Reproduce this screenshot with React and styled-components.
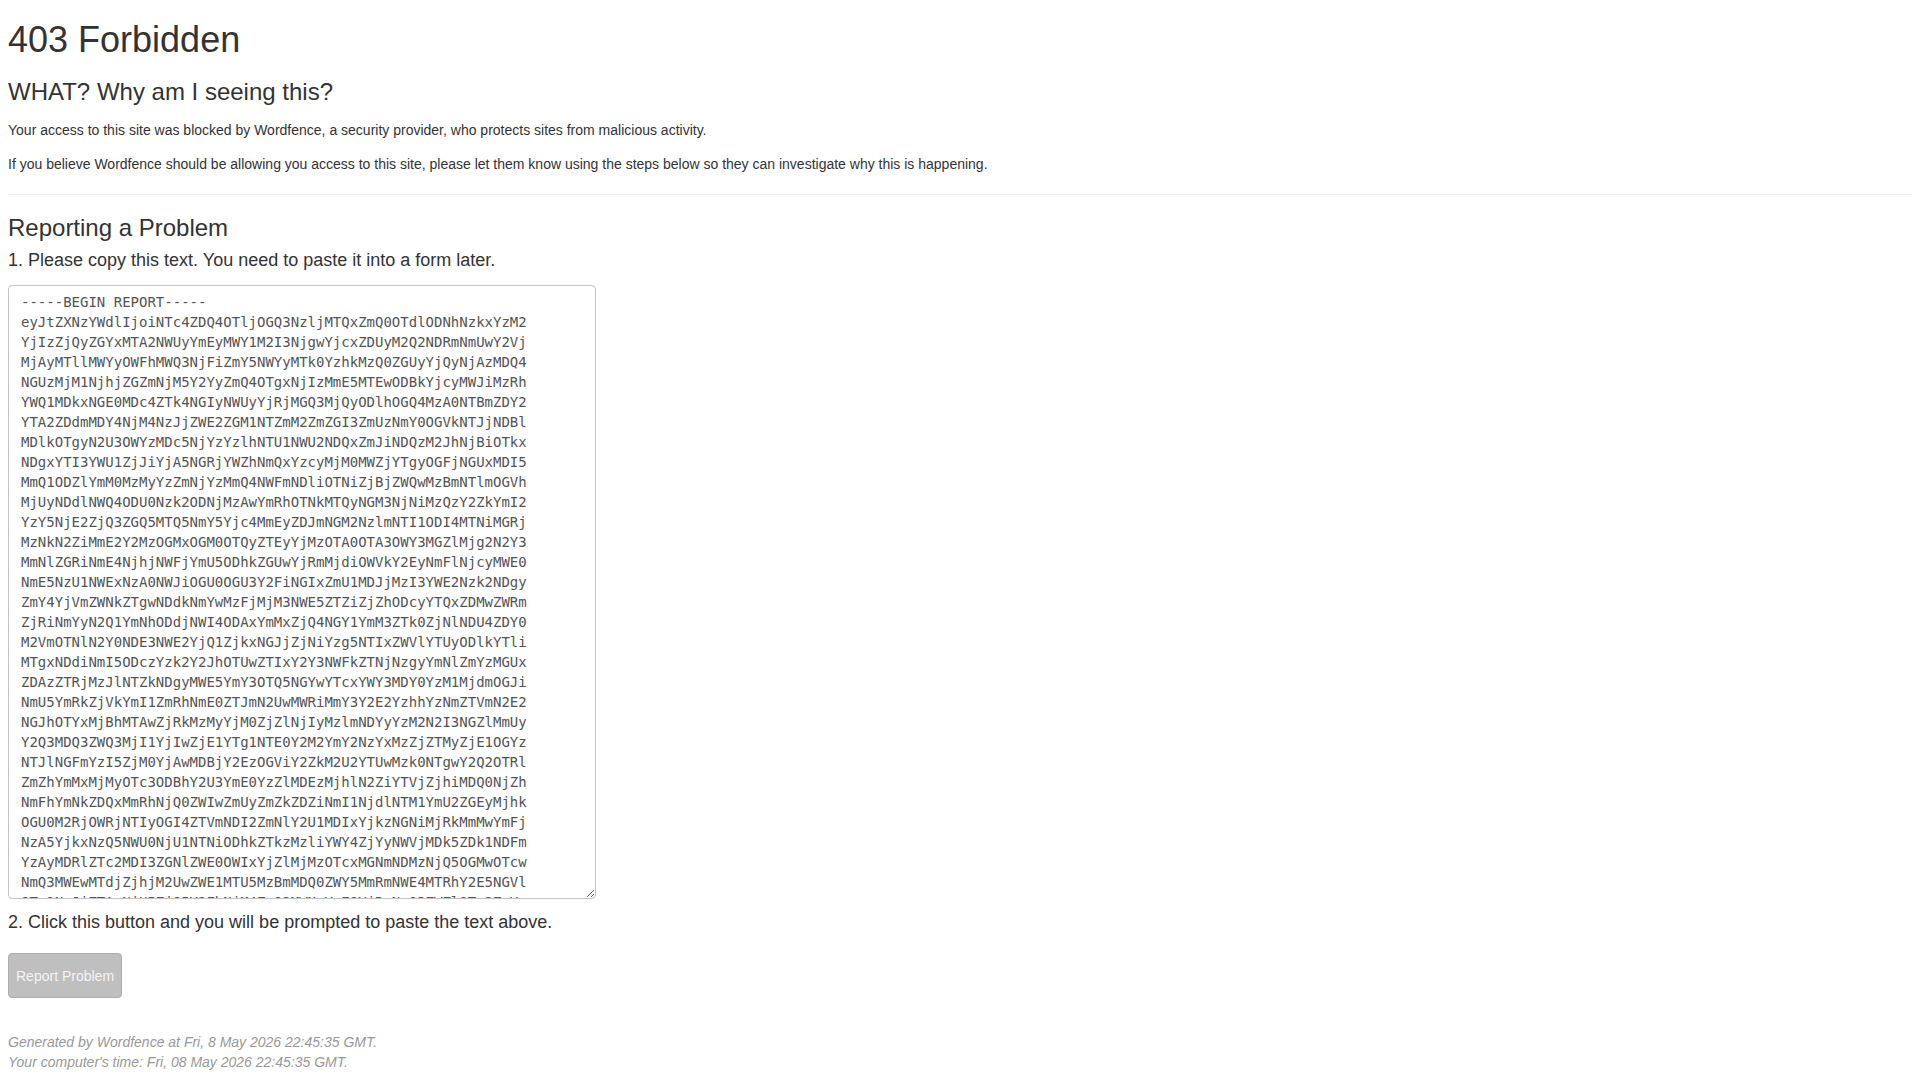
import React from 'react';
import styled, { createGlobalStyle } from 'styled-components';

const reportLines = [
    '-----BEGIN REPORT-----',
    'eyJtZXNzYWdlIjoiNTc4ZDQ4OTljOGQ3NzljMTQxZmQ0OTdlODNhNzkxYzM2',
    'YjIzZjQyZGYxMTA2NWUyYmEyMWY1M2I3NjgwYjcxZDUyM2Q2NDRmNmUwY2Vj',
    'MjAyMTllMWYyOWFhMWQ3NjFiZmY5NWYyMTk0YzhkMzQ0ZGUyYjQyNjAzMDQ4',
    'NGUzMjM1NjhjZGZmNjM5Y2YyZmQ4OTgxNjIzMmE5MTEwODBkYjcyMWJiMzRh',
    'YWQ1MDkxNGE0MDc4ZTk4NGIyNWUyYjRjMGQ3MjQyODlhOGQ4MzA0NTBmZDY2',
    'YTA2ZDdmMDY4NjM4NzJjZWE2ZGM1NTZmM2ZmZGI3ZmUzNmY0OGVkNTJjNDBl',
    'MDlkOTgyN2U3OWYzMDc5NjYzYzlhNTU1NWU2NDQxZmJiNDQzM2JhNjBiOTkx',
    'NDgxYTI3YWU1ZjJiYjA5NGRjYWZhNmQxYzcyMjM0MWZjYTgyOGFjNGUxMDI5',
    'MmQ1ODZlYmM0MzMyYzZmNjYzMmQ4NWFmNDliOTNiZjBjZWQwMzBmNTlmOGVh',
    'MjUyNDdlNWQ4ODU0Nzk2ODNjMzAwYmRhOTNkMTQyNGM3NjNiMzQzY2ZkYmI2',
    'YzY5NjE2ZjQ3ZGQ5MTQ5NmY5Yjc4MmEyZDJmNGM2NzlmNTI1ODI4MTNiMGRj',
    'MzNkN2ZiMmE2Y2MzOGMxOGM0OTQyZTEyYjMzOTA0OTA3OWY3MGZlMjg2N2Y3',
    'MmNlZGRiNmE4NjhjNWFjYmU5ODhkZGUwYjRmMjdiOWVkY2EyNmFlNjcyMWE0',
    'NmE5NzU1NWExNzA0NWJiOGU0OGU3Y2FiNGIxZmU1MDJjMzI3YWE2Nzk2NDgy',
    'ZmY4YjVmZWNkZTgwNDdkNmYwMzFjMjM3NWE5ZTZiZjZhODcyYTQxZDMwZWRm',
    'ZjRiNmYyN2Q1YmNhODdjNWI4ODAxYmMxZjQ4NGY1YmM3ZTk0ZjNlNDU4ZDY0',
    'M2VmOTNlN2Y0NDE3NWE2YjQ1ZjkxNGJjZjNiYzg5NTIxZWVlYTUyODlkYTli',
    'MTgxNDdiNmI5ODczYzk2Y2JhOTUwZTIxY2Y3NWFkZTNjNzgyYmNlZmYzMGUx',
    'ZDAzZTRjMzJlNTZkNDgyMWE5YmY3OTQ5NGYwYTcxYWY3MDY0YzM1MjdmOGJi',
    'NmU5YmRkZjVkYmI1ZmRhNmE0ZTJmN2UwMWRiMmY3Y2E2YzhhYzNmZTVmN2E2',
    'NGJhOTYxMjBhMTAwZjRkMzMyYjM0ZjZlNjIyMzlmNDYyYzM2N2I3NGZlMmUy',
    'Y2Q3MDQ3ZWQ3MjI1YjIwZjE1YTg1NTE0Y2M2YmY2NzYxMzZjZTMyZjE1OGYz',
    'NTJlNGFmYzI5ZjM0YjAwMDBjY2EzOGViY2ZkM2U2YTUwMzk0NTgwY2Q2OTRl',
    'ZmZhYmMxMjMyOTc3ODBhY2U3YmE0YzZlMDEzMjhlN2ZiYTVjZjhiMDQ0NjZh',
    'NmFhYmNkZDQxMmRhNjQ0ZWIwZmUyZmZkZDZiNmI1NjdlNTM1YmU2ZGEyMjhk',
    'OGU0M2RjOWRjNTIyOGI4ZTVmNDI2ZmNlY2U1MDIxYjkzNGNiMjRkMmMwYmFj',
    'NzA5YjkxNzQ5NWU0NjU1NTNiODhkZTkzMzliYWY4ZjYyNWVjMDk5ZDk1NDFm',
    'YzAyMDRlZTc2MDI3ZGNlZWE0OWIxYjZlMjMzOTcxMGNmNDMzNjQ5OGMwOTcw',
    'NmQ3MWEwMTdjZjhjM2UwZWE1MTU5MzBmMDQ0ZWY5MmRmNWE4MTRhY2E5NGVl',
    'OTc1NmJiZTAzNjU5ZjQ5Y2FhNjM4ZmQ2MWNmYzE0YjRmNzQ3ZWZlOTc2ZmYy',
    'ZDE0ODk2NjA5ZjE2MjhlNjQ1YWUzNjZmMmE1OWQ2NzY2MGJmOTcyMjE5MzZk',
    'In0=',
    '-----END REPORT-----',
];

const App = () => {
    return (
        <>
            <GlobalStyle />
            <Page>
                <Title>403 Forbidden</Title>
                <SectionTitle $top={19} $bottom={15}>WHAT? Why am I seeing this?</SectionTitle>
                <Paragraph>Your access to this site was blocked by Wordfence, a security provider, who protects sites from malicious activity.</Paragraph>
                <Paragraph>If you believe Wordfence should be allowing you access to this site, please let them know using the steps below so they can investigate why this is happening.</Paragraph>

                <Divider />

                <SectionTitle $top={0} $bottom={10}>Reporting a Problem</SectionTitle>
                <Step>1. Please copy this text. You need to paste it into a form later.</Step>
                <ReportBox readOnly defaultValue={reportLines.join('\n')} />

                <Step>2. Click this button and you will be prompted to paste the text above.</Step>
                <ReportButton type="button" disabled>Report Problem</ReportButton>

                <Footer>
                    Generated by Wordfence at Fri, 8 May 2026 22:45:35 GMT.<br />
                    Your computer's time: Fri, 08 May 2026 22:45:35 GMT.
                </Footer>
            </Page>
        </>
    );
};

const GlobalStyle = createGlobalStyle`
    html, body {
        margin: 0;
        padding: 0;
        background: #fff;
    }

    body {
        font-family: "Liberation Sans", Arial, sans-serif;
        font-size: 14px;
        line-height: 20px;
        color: #333;
    }
`;

const Page = styled.div`
    padding: 20px 8px 0;
`;

const Title = styled.h1`
    margin: 0;
    font-size: 36px;
    font-weight: 400;
    line-height: 39.6px;
    color: #333;
`;

const SectionTitle = styled.h3`
    margin: ${p => p.$top}px 0 ${p => p.$bottom}px;
    font-size: 24px;
    font-weight: 400;
    line-height: 26.4px;
    color: #333;
`;

const Paragraph = styled.p`
    margin: 0;
    line-height: 20px;

    & + & {
        margin-top: 14px;
    }
`;

const Divider = styled.hr`
    margin: 20px 0;
    border: 0;
    border-top: 1px solid #eee;
`;

const Step = styled.h4`
    margin: 0;
    font-size: 18px;
    font-weight: 400;
    line-height: 19.8px;
    color: #333;
`;

const ReportBox = styled.textarea`
    display: block;
    box-sizing: border-box;
    width: 588px;
    height: 614px;
    margin: 14px 0 14px;
    padding: 6px 12px;
    border: 1px solid #c4c4c4;
    border-radius: 4px;
    font-family: "DejaVu Sans Mono", monospace;
    font-size: 14px;
    line-height: 20px;
    color: #555;
    background: #fff;
    white-space: pre;
    overflow: hidden;
    resize: both;
    outline: none;
`;

const ReportButton = styled.button`
    display: block;
    box-sizing: border-box;
    height: 45px;
    margin-top: 20px;
    padding: 0 7px;
    border: 1px solid #adadad;
    border-radius: 4px;
    background: #bfbfbf;
    color: #f4f4f4;
    font-family: "Liberation Sans", Arial, sans-serif;
    font-size: 14px;
    cursor: not-allowed;
`;

const Footer = styled.p`
    margin: 34px 0 0;
    font-style: italic;
    line-height: 20px;
    color: #999;
`;

export default App;
